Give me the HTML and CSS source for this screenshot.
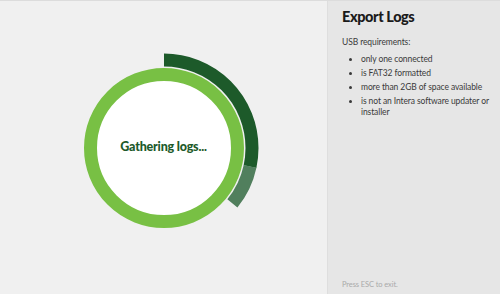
FILE: index.html
```html
<!DOCTYPE html>
<html lang="en">
<head>
    <meta charset="UTF-8">
    <title>Export Logs</title>
    <link rel="stylesheet" href="styles.css">
</head>
<body>
    <div class="screen">
        <div class="progress-area">
            <div class="spinner">
                <svg width="200" height="200" viewBox="0 0 200 200">
                    <!-- outer progress arc -->
                    <circle class="arc-done" cx="100" cy="100" r="88" transform="rotate(-90 100 100)"></circle>
                    <circle class="arc-next" cx="100" cy="100" r="88" transform="rotate(12 100 100)"></circle>
                    <!-- inner ring -->
                    <circle class="ring" cx="100" cy="100" r="73.5"></circle>
                </svg>
                <div class="spinner-label">Gathering logs...</div>
            </div>
        </div>

        <div class="sidebar">
            <h1>Export Logs</h1>
            <p>USB requirements:</p>
            <ul>
                <li>only one connected</li>
                <li>is FAT32 formatted</li>
                <li>more than 2GB of space available</li>
                <li>is not an Intera software updater or installer</li>
            </ul>
            <div class="hint">Press ESC to exit.</div>
        </div>
    </div>
</body>
</html>
```

FILE: styles.css
```css
html, body {
    margin: 0;
    padding: 0;
}
body {
    font-family: Lato, "DejaVu Sans Condensed", sans-serif;
    width: 500px;
    height: 294px;
    overflow: hidden;
}
.screen {
    display: flex;
    height: 294px;
    border-top: 1px solid #dcdcdc;
    box-sizing: border-box;
}
.progress-area {
    width: 327px;
    background: #f0f0f0;
    display: flex;
    align-items: center;
    justify-content: center;
}
.spinner {
    position: relative;
    width: 200px;
    height: 200px;
}
.spinner svg {
    display: block;
}
.arc-done {
    fill: none;
    stroke: #1d5a2a;
    stroke-width: 13;
    stroke-dasharray: 156.7 600;
}
.arc-next {
    fill: none;
    stroke: #517f5d;
    stroke-width: 13;
    stroke-dasharray: 41.5 600;
}
.ring {
    fill: #ffffff;
    stroke: #78c044;
    stroke-width: 13;
}
.spinner-label {
    position: absolute;
    left: 0;
    right: 0;
    top: 91px;
    text-align: center;
    font-size: 12.5px;
    font-weight: 900;
    letter-spacing: -0.2px;
    color: #1d5a2a;
}
.sidebar {
    flex: 1;
    background: #e6e6e6;
    border-left: 1px solid #dedede;
    padding: 7px 6px 0 14px;
    position: relative;
    color: #333;
    letter-spacing: -0.1px;
}
.sidebar h1 {
    margin: 0;
    font-size: 14.5px;
    font-weight: 900;
    letter-spacing: -0.4px;
    color: #1a1a1a;
}
.sidebar p {
    margin: 12px 0 7px;
    font-size: 8.5px;
    color: #3a3a3a;
}
.sidebar ul {
    margin: 0;
    padding-left: 19px;
    font-size: 8.5px;
    line-height: 11px;
    color: #3a3a3a;
}
.sidebar li {
    margin-bottom: 3px;
}
.hint {
    position: absolute;
    left: 14px;
    bottom: 5px;
    font-size: 7.5px;
    color: #aaa;
}
```
